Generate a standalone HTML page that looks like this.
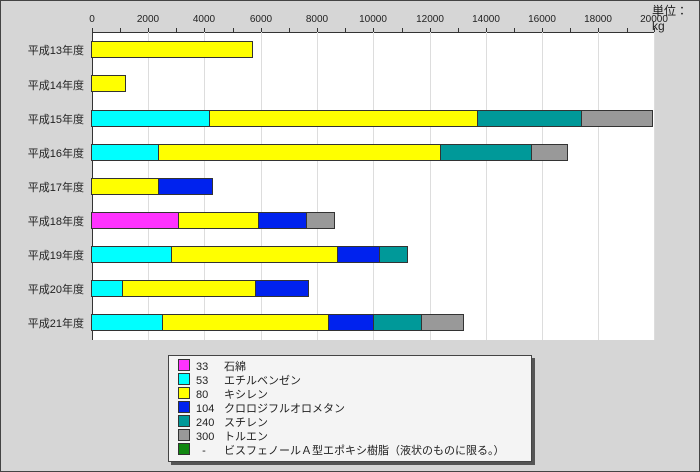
<!DOCTYPE html>
<html><head><meta charset="utf-8"><style>
body{margin:0;width:700px;height:472px;overflow:hidden;background:#d6d6d6;font-family:"Liberation Sans","Noto Sans CJK JP",sans-serif;}
.f{position:absolute;left:0;top:0;width:698px;height:470px;border:1px solid #444;background:#d6d6d6}
.a{position:absolute}
.plot{left:92px;top:32px;width:563px;height:308px;background:#fff;border-top:1px solid #333;border-left:1px solid #333;box-sizing:border-box}
.g{position:absolute;top:32px;height:308px;width:1px;background:#ddd}
.t{position:absolute;top:28px;width:1px;height:4px;background:#333}
.xl{position:absolute;top:14px;font-size:10px;color:#222;width:50px;text-align:center;margin-left:-25px}
.yl{position:absolute;left:6px;width:78px;text-align:right;font-size:11px;color:#222}
.b{position:absolute;height:17px;border:1px solid #333;box-sizing:border-box}
.y{background:#ffff00}.c{background:#00ffff}.tl{background:#009999}.gr{background:#999}.bl{background:#0022ee}.m{background:#ff33ff}.gn{background:#118811}
.lg{left:168px;top:355px;width:362px;height:105px;background:#f4f4f4;border:1px solid #444;box-shadow:3px 3px 0 #555;font-size:11px;color:#222}
.li{position:absolute;left:9px;height:14px;line-height:14px}
.li i{display:inline-block;width:10px;height:10px;border:1px solid #333;vertical-align:-1px;margin-right:6px}
.li span{display:inline-block;width:28px}
</style></head><body><div class="f"></div>
<div class="a plot"></div>
<div class="g" style="left:148px"></div><div class="g" style="left:204px"></div><div class="g" style="left:261px"></div><div class="g" style="left:317px"></div><div class="g" style="left:373px"></div><div class="g" style="left:430px"></div><div class="g" style="left:486px"></div><div class="g" style="left:542px"></div><div class="g" style="left:598px"></div><div class="g" style="left:654px"></div>
<div class="t" style="left:92px"></div><div class="t" style="left:120px"></div><div class="t" style="left:148px"></div><div class="t" style="left:176px"></div><div class="t" style="left:204px"></div><div class="t" style="left:233px"></div><div class="t" style="left:261px"></div><div class="t" style="left:289px"></div><div class="t" style="left:317px"></div><div class="t" style="left:345px"></div><div class="t" style="left:373px"></div><div class="t" style="left:402px"></div><div class="t" style="left:430px"></div><div class="t" style="left:458px"></div><div class="t" style="left:486px"></div><div class="t" style="left:514px"></div><div class="t" style="left:542px"></div><div class="t" style="left:570px"></div><div class="t" style="left:598px"></div><div class="t" style="left:627px"></div><div class="t" style="left:654px"></div>
<div class="xl" style="left:92px">0</div><div class="xl" style="left:148px">2000</div><div class="xl" style="left:204px">4000</div><div class="xl" style="left:261px">6000</div><div class="xl" style="left:317px">8000</div><div class="xl" style="left:373px">10000</div><div class="xl" style="left:430px">12000</div><div class="xl" style="left:486px">14000</div><div class="xl" style="left:542px">16000</div><div class="xl" style="left:598px">18000</div><div class="xl" style="left:654px">20000</div>
<div class="a" style="left:652px;top:2px;font-size:12px;color:#222">単位：kg</div>
<div class="yl" style="top:42px">平成13年度</div>
<div class="yl" style="top:77px">平成14年度</div>
<div class="yl" style="top:111px">平成15年度</div>
<div class="yl" style="top:145px">平成16年度</div>
<div class="yl" style="top:179px">平成17年度</div>
<div class="yl" style="top:213px">平成18年度</div>
<div class="yl" style="top:247px">平成19年度</div>
<div class="yl" style="top:281px">平成20年度</div>
<div class="yl" style="top:315px">平成21年度</div>
<div class="b y" style="left:91px;top:41px;width:162px"></div>
<div class="b y" style="left:91px;top:75px;width:35px"></div>
<div class="b c" style="left:91px;top:110px;width:119px"></div><div class="b y" style="left:209px;top:110px;width:269px"></div><div class="b tl" style="left:477px;top:110px;width:105px"></div><div class="b gr" style="left:581px;top:110px;width:72px"></div>
<div class="b c" style="left:91px;top:144px;width:68px"></div><div class="b y" style="left:158px;top:144px;width:283px"></div><div class="b tl" style="left:440px;top:144px;width:92px"></div><div class="b gr" style="left:531px;top:144px;width:37px"></div>
<div class="b y" style="left:91px;top:178px;width:68px"></div><div class="b bl" style="left:158px;top:178px;width:55px"></div>
<div class="b m" style="left:91px;top:212px;width:88px"></div><div class="b y" style="left:178px;top:212px;width:81px"></div><div class="b bl" style="left:258px;top:212px;width:49px"></div><div class="b gr" style="left:306px;top:212px;width:29px"></div>
<div class="b c" style="left:91px;top:246px;width:81px"></div><div class="b y" style="left:171px;top:246px;width:167px"></div><div class="b bl" style="left:337px;top:246px;width:43px"></div><div class="b tl" style="left:379px;top:246px;width:29px"></div>
<div class="b c" style="left:91px;top:280px;width:32px"></div><div class="b y" style="left:122px;top:280px;width:134px"></div><div class="b bl" style="left:255px;top:280px;width:54px"></div>
<div class="b c" style="left:91px;top:314px;width:72px"></div><div class="b y" style="left:162px;top:314px;width:167px"></div><div class="b bl" style="left:328px;top:314px;width:46px"></div><div class="b tl" style="left:373px;top:314px;width:49px"></div><div class="b gr" style="left:421px;top:314px;width:43px"></div>
<div class="a lg">
<div class="li" style="top:3px"><i class="m"></i><span>33</span>石綿</div>
<div class="li" style="top:17px"><i class="c"></i><span>53</span>エチルベンゼン</div>
<div class="li" style="top:31px"><i class="y"></i><span>80</span>キシレン</div>
<div class="li" style="top:45px"><i class="bl"></i><span>104</span>クロロジフルオロメタン</div>
<div class="li" style="top:59px"><i class="tl"></i><span>240</span>スチレン</div>
<div class="li" style="top:73px"><i class="gr"></i><span>300</span>トルエン</div>
<div class="li" style="top:87px"><i class="gn"></i><span>&nbsp;&nbsp;-</span>ビスフェノールＡ型エポキシ樹脂（液状のものに限る。）</div>
</div>
</body></html>
